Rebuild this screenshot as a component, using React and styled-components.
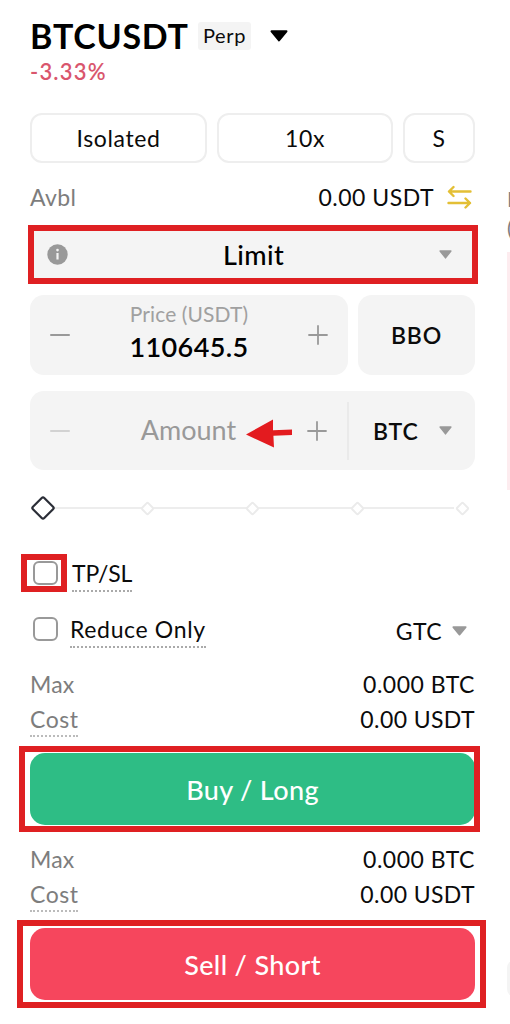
import styled, { createGlobalStyle } from 'styled-components'

const stops = [0, 25, 50, 75, 100]

function Caret({ width = 13, height = 9, color = '#999' }) {
  return (
    <svg width={width} height={height} viewBox="0 0 14 9" preserveAspectRatio="none">
      <path
        d="M1.2 1h11.6L7 7.8z"
        fill={color}
        stroke={color}
        strokeWidth="1.6"
        strokeLinejoin="round"
      />
    </svg>
  )
}

function Minus({ color = '#999' }) {
  return (
    <svg width="20" height="20" viewBox="0 0 20 20">
      <path d="M1 10h18" stroke={color} strokeWidth="2" strokeLinecap="round" />
    </svg>
  )
}

function Plus() {
  return (
    <svg width="20" height="20" viewBox="0 0 20 20">
      <path d="M1 10h18M10 1v18" stroke="#999" strokeWidth="1.8" strokeLinecap="round" />
    </svg>
  )
}

function TransferIcon() {
  return (
    <svg width="25" height="24" viewBox="0 0 25 24" fill="none">
      <path
        d="M23.5 6.500H2M6.500 2 2 6.500 6.500 11M1.500 18H23M18.500 13.500 23 18l-4.500 4.500"
        stroke="#e3bf35"
        strokeWidth="2.400"
        strokeLinecap="round"
        strokeLinejoin="round"
      />
    </svg>
  )
}

function InfoIcon() {
  return (
    <svg width="21" height="21" viewBox="0 0 21 21">
      <circle cx="10.5" cy="10.5" r="10.2" fill="#999" />
      <circle cx="10.5" cy="6.1" r="1.3" fill="#f4f4f4" />
      <path d="M10.5 9v6.5" stroke="#f4f4f4" strokeWidth="2.2" />
    </svg>
  )
}

function Diamond({ active }) {
  return active ? (
    <svg width="26" height="26" viewBox="0 0 26 26">
      <rect
        x="5"
        y="5"
        width="16"
        height="16"
        rx="1.8"
        transform="rotate(45 13 13)"
        fill="#fff"
        stroke="#2b2e37"
        strokeWidth="2.2"
      />
    </svg>
  ) : (
    <svg width="15" height="15" viewBox="0 0 15 15">
      <rect
        x="3.2"
        y="3.2"
        width="8.6"
        height="8.6"
        rx="1.4"
        transform="rotate(45 7.5 7.5)"
        fill="#fff"
        stroke="#ebebeb"
        strokeWidth="2"
      />
    </svg>
  )
}

function Summary() {
  return (
    <SummaryList>
      <SummaryRow>
        <Label $spacing={0.2}>Max</Label>
        <Value $spacing={0.5}>0.000 BTC</Value>
      </SummaryRow>
      <SummaryRow>
        <Label $dotted $spacing={0.5}>
          Cost
        </Label>
        <Value $spacing={0.4}>0.00 USDT</Value>
      </SummaryRow>
    </SummaryList>
  )
}

function App() {
  return (
    <Page>
      <GlobalStyle />
      <Panel>
        <Header>
          <Symbol>BTCUSDT</Symbol>
          <Badge>Perp</Badge>
          <Caret width={18} height={12} color="#000" />
        </Header>
        <Change>-3.33%</Change>

        <ModeRow>
          <ModeButton>Isolated</ModeButton>
          <ModeButton>10x</ModeButton>
          <ModeButton>S</ModeButton>
        </ModeRow>

        <BalanceRow>
          <Label $spacing={0.4}>Avbl</Label>
          <Balance>
            <Value $spacing={0.5}>0.00 USDT</Value>
            <TransferIcon />
          </Balance>
        </BalanceRow>

        <OrderType>
          <InfoIcon />
          <OrderTypeName>Limit</OrderTypeName>
          <Caret />
          <Highlight $top={-1} $right={-3} $bottom={-1} $left={-2} />
        </OrderType>

        <PriceRow>
          <PriceBox>
            <Minus />
            <PriceField>
              <PriceLabel>Price (USDT)</PriceLabel>
              <PriceValue>110645.5</PriceValue>
            </PriceField>
            <Plus />
          </PriceBox>
          <BboButton>BBO</BboButton>
        </PriceRow>

        <AmountBox>
          <AmountInput>
            <Minus color="#d2d2d2" />
            <Placeholder>Amount</Placeholder>
            <Plus />
            <Pointer width="48" height="30" viewBox="0 0 48 30">
              <path d="M1 15.5 28 .5v10.8l19-.8v5.6l-18.6.7.6 11.7z" fill="#e31b1f" />
            </Pointer>
          </AmountInput>
          <Unit>
            BTC
            <Caret />
          </Unit>
        </AmountBox>

        <Slider>
          {stops.map((stop) => (
            <Stop key={stop}>
              <Diamond active={stop === 0} />
            </Stop>
          ))}
        </Slider>

        <OptionRow $height={57}>
          <CheckWrap>
            <Checkbox />
            <Highlight $top={-7} $right={-9} $bottom={-7} $left={-12} />
          </CheckWrap>
          <OptionLabel $indent={2} $spacing={-0.2}>
            TP/SL
          </OptionLabel>
        </OptionRow>
        <OptionRow $height={55}>
          <CheckWrap>
            <Checkbox />
          </CheckWrap>
          <OptionLabel $spacing={0.65}>Reduce Only</OptionLabel>
          <TimeInForce>
            GTC
            <Caret width={15} height={10} />
          </TimeInForce>
        </OptionRow>

        <Totals>
          <Summary />
          <ActionButton $color="#2ebd85">
            Buy / Long
            <Highlight $top={-7} $right={-5} $bottom={-7} $left={-11} />
          </ActionButton>
          <Summary />
          <ActionButton $color="#f6465d">
            Sell / Short
            <Highlight $top={-8} $right={-11} $bottom={-8} $left={-13} />
          </ActionButton>
        </Totals>
      </Panel>

      <OrderBook>
        <BookTitle>
          Price
          <br />
          (USDT)
        </BookTitle>
        <AskDepth />
        <BookSelect />
      </OrderBook>
    </Page>
  )
}

export default App

const GlobalStyle = createGlobalStyle`
  * {
    box-sizing: border-box;
  }

  body {
    margin: 0;
    background: #fff;
    font-family: Lato, 'Open Sans', sans-serif;
    color: #0b0b0b;
  }

  svg {
    display: block;
    flex-shrink: 0;
  }

  button {
    padding: 0;
    font-family: inherit;
    color: inherit;
  }
`

const Page = styled.div`
  display: flex;
  width: 510px;
  height: 1024px;
  overflow: hidden;
  background: #fff;
`

const Panel = styled.main`
  display: flex;
  flex-direction: column;
  flex-shrink: 0;
  width: 507px;
  padding: 18px 32px 0 30px;
`

const Highlight = styled.span`
  position: absolute;
  top: ${({ $top }) => $top}px;
  right: ${({ $right }) => $right}px;
  bottom: ${({ $bottom }) => $bottom}px;
  left: ${({ $left }) => $left}px;
  border: 6px solid #df2022;
  pointer-events: none;
`

const Header = styled.header`
  display: flex;
  align-items: center;
  height: 36px;
`

const Symbol = styled.h1`
  width: 168px;
  margin: 0;
  font-size: 34px;
  font-weight: 700;
  line-height: 36px;
  letter-spacing: 0.75px;
  color: #000;
`

const Badge = styled.span`
  width: 53px;
  height: 28px;
  margin-right: 19px;
  border-radius: 3px;
  background: #f4f4f4;
  font-size: 20px;
  line-height: 27px;
  letter-spacing: 0.6px;
  text-align: center;
`

const Change = styled.p`
  height: 36px;
  margin: 0;
  font-size: 22px;
  font-weight: 600;
  line-height: 35px;
  letter-spacing: 1.2px;
  color: #d9566d;
`

const ModeRow = styled.div`
  display: grid;
  grid-template-columns: 177px 176px 72px;
  gap: 10px;
  height: 50px;
  margin-top: 23px;
`

const ModeButton = styled.button`
  border: 2px solid #eee;
  border-radius: 12px;
  background: #fff;
  font-size: 23px;
  letter-spacing: 0.6px;
`

const BalanceRow = styled.div`
  display: flex;
  align-items: center;
  justify-content: space-between;
  height: 63px;
  padding: 4px 3px 0 0;
`

const Balance = styled.div`
  display: flex;
  align-items: center;
  gap: 13px;
`

const Label = styled.span`
  font-size: 23px;
  line-height: 32px;
  letter-spacing: ${({ $spacing }) => $spacing}px;
  color: #7d7d7d;
  border-bottom: ${({ $dotted }) => ($dotted ? '2px dotted #bbb' : '0')};
`

const Value = styled.span`
  font-size: 23px;
  line-height: 32px;
  letter-spacing: ${({ $spacing }) => $spacing}px;
`

const OrderType = styled.div`
  position: relative;
  display: flex;
  align-items: center;
  justify-content: space-between;
  height: 57px;
  padding: 0 23px 0 17px;
  background: #f4f4f4;
`

const OrderTypeName = styled.span`
  font-size: 27px;
  font-weight: 500;
  letter-spacing: 0.4px;
  color: #000;
`

const PriceRow = styled.div`
  display: grid;
  grid-template-columns: 318px 117px;
  gap: 10px;
  height: 80px;
  margin-top: 12px;
`

const PriceBox = styled.div`
  display: flex;
  align-items: center;
  justify-content: space-between;
  padding: 0 20px;
  border-radius: 14px;
  background: #f4f4f4;
`

const PriceField = styled.div`
  padding-bottom: 5px;
  text-align: center;
`

const PriceLabel = styled.div`
  font-size: 21px;
  line-height: 29px;
  letter-spacing: 0.1px;
  color: #a0a0a0;
`

const PriceValue = styled.div`
  font-size: 27px;
  font-weight: 600;
  line-height: 38px;
  letter-spacing: 0.4px;
  color: #000;
`

const BboButton = styled.button`
  border: 0;
  border-radius: 14px;
  background: #f4f4f4;
  font-size: 23px;
  font-weight: 600;
  letter-spacing: 0.8px;
`

const AmountBox = styled.div`
  display: flex;
  align-items: center;
  height: 79px;
  margin-top: 16px;
  border-radius: 14px;
  background: #f4f4f4;
`

const AmountInput = styled.div`
  position: relative;
  display: flex;
  align-items: center;
  justify-content: space-between;
  width: 319px;
  height: 58px;
  padding: 0 20px 0 20px;
  border-right: 2px solid #eaeaea;
`

const Placeholder = styled.span`
  padding-bottom: 2px;
  font-size: 27px;
  color: #999;
`

const Pointer = styled.svg`
  position: absolute;
  top: 17px;
  left: 215px;
`

const Unit = styled.div`
  display: flex;
  flex: 1;
  align-items: center;
  justify-content: space-between;
  padding: 0 23px 0 24px;
  font-size: 23px;
  font-weight: 600;
  letter-spacing: 0.8px;
`

const Slider = styled.div`
  display: flex;
  align-items: center;
  justify-content: space-between;
  height: 76px;
  background: linear-gradient(#ededed, #ededed) 14px 50% / 410px 2px no-repeat;
`

const Stop = styled.span`
  display: flex;
  justify-content: center;
  width: 26px;
`

const OptionRow = styled.div`
  display: flex;
  align-items: center;
  height: ${({ $height }) => $height}px;
`

const CheckWrap = styled.span`
  position: relative;
  width: 25px;
  height: 24px;
  margin: 0 12px 3px 3px;
`

const Checkbox = styled.span`
  display: block;
  width: 25px;
  height: 24px;
  border: 2px solid #999;
  border-radius: 6px;
`

const OptionLabel = styled.span`
  margin-left: ${({ $indent = 0 }) => $indent}px;
  border-bottom: 2px dotted #aaa;
  font-size: 23px;
  line-height: 33px;
  letter-spacing: ${({ $spacing }) => $spacing}px;
`

const TimeInForce = styled.span`
  display: flex;
  align-items: center;
  gap: 10px;
  margin-left: auto;
  padding-right: 8px;
  font-size: 23px;
  letter-spacing: 0.4px;
`

const Totals = styled.section`
  display: flex;
  flex-direction: column;
  padding-top: 10px;
`

const SummaryList = styled.div`
  display: flex;
  flex-direction: column;
  gap: 3px;
  height: 85px;
`

const SummaryRow = styled.div`
  display: flex;
  align-items: flex-start;
  justify-content: space-between;
`

const ActionButton = styled.button`
  position: relative;
  height: 72px;
  margin-bottom: 18px;
  border: 0;
  border-radius: 15px;
  background: ${({ $color }) => $color};
  font-size: 27px;
  font-weight: 500;
  letter-spacing: 0.35px;
  color: #fff;
`

const OrderBook = styled.aside`
  display: flex;
  flex-direction: column;
  flex-shrink: 0;
  width: 120px;
  padding-top: 184px;
`

const BookTitle = styled.div`
  height: 68px;
  font-size: 21px;
  line-height: 29px;
  color: #7d7d7d;
`

const AskDepth = styled.div`
  height: 238px;
  background: #fdecef;
`

const BookSelect = styled.div`
  height: 37px;
  margin-top: 470px;
  border-radius: 8px;
  background: #f4f4f4;
`
